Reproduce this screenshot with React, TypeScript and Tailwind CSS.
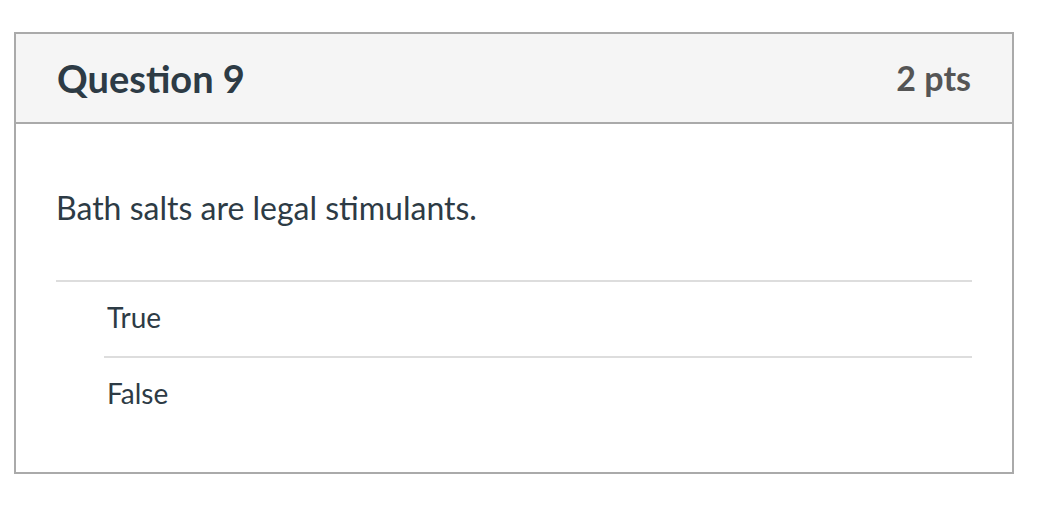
export default function App() {
  return (
    <div className="h-[516px] w-[1044px] bg-white pl-[14px] pt-8 font-['Lato','Liberation_Sans',sans-serif] text-[#2d3b45]">
      <div className="w-[1000px] border-2 border-[#aaaaaa]">
        {/* header */}
        <div className="flex h-[90px] items-center justify-between border-b-2 border-[#aaaaaa] bg-[#f5f5f5] px-[41px]">
          <h2 className="text-[38px] font-bold leading-none">Question 9</h2>
          <div className="text-[34px] font-bold leading-none text-[#555555]">2 pts</div>
        </div>

        {/* body */}
        <div className="px-[40px] pb-[40px] pt-[64px]">
          <p className="text-[32px] leading-[39px]">Bath salts are legal stimulants.</p>
          <div className="mt-[53px] border-t-2 border-[#dddddd]">
            <div className="flex h-[74px] items-center pb-[5px] pl-[51px] text-[28px]">True</div>
            <div className="ml-[48px] border-t-2 border-[#dddddd]" />
            <div className="flex h-[74px] items-center pb-[5px] pl-[51px] text-[28px]">False</div>
          </div>
        </div>
      </div>
    </div>
  );
}
